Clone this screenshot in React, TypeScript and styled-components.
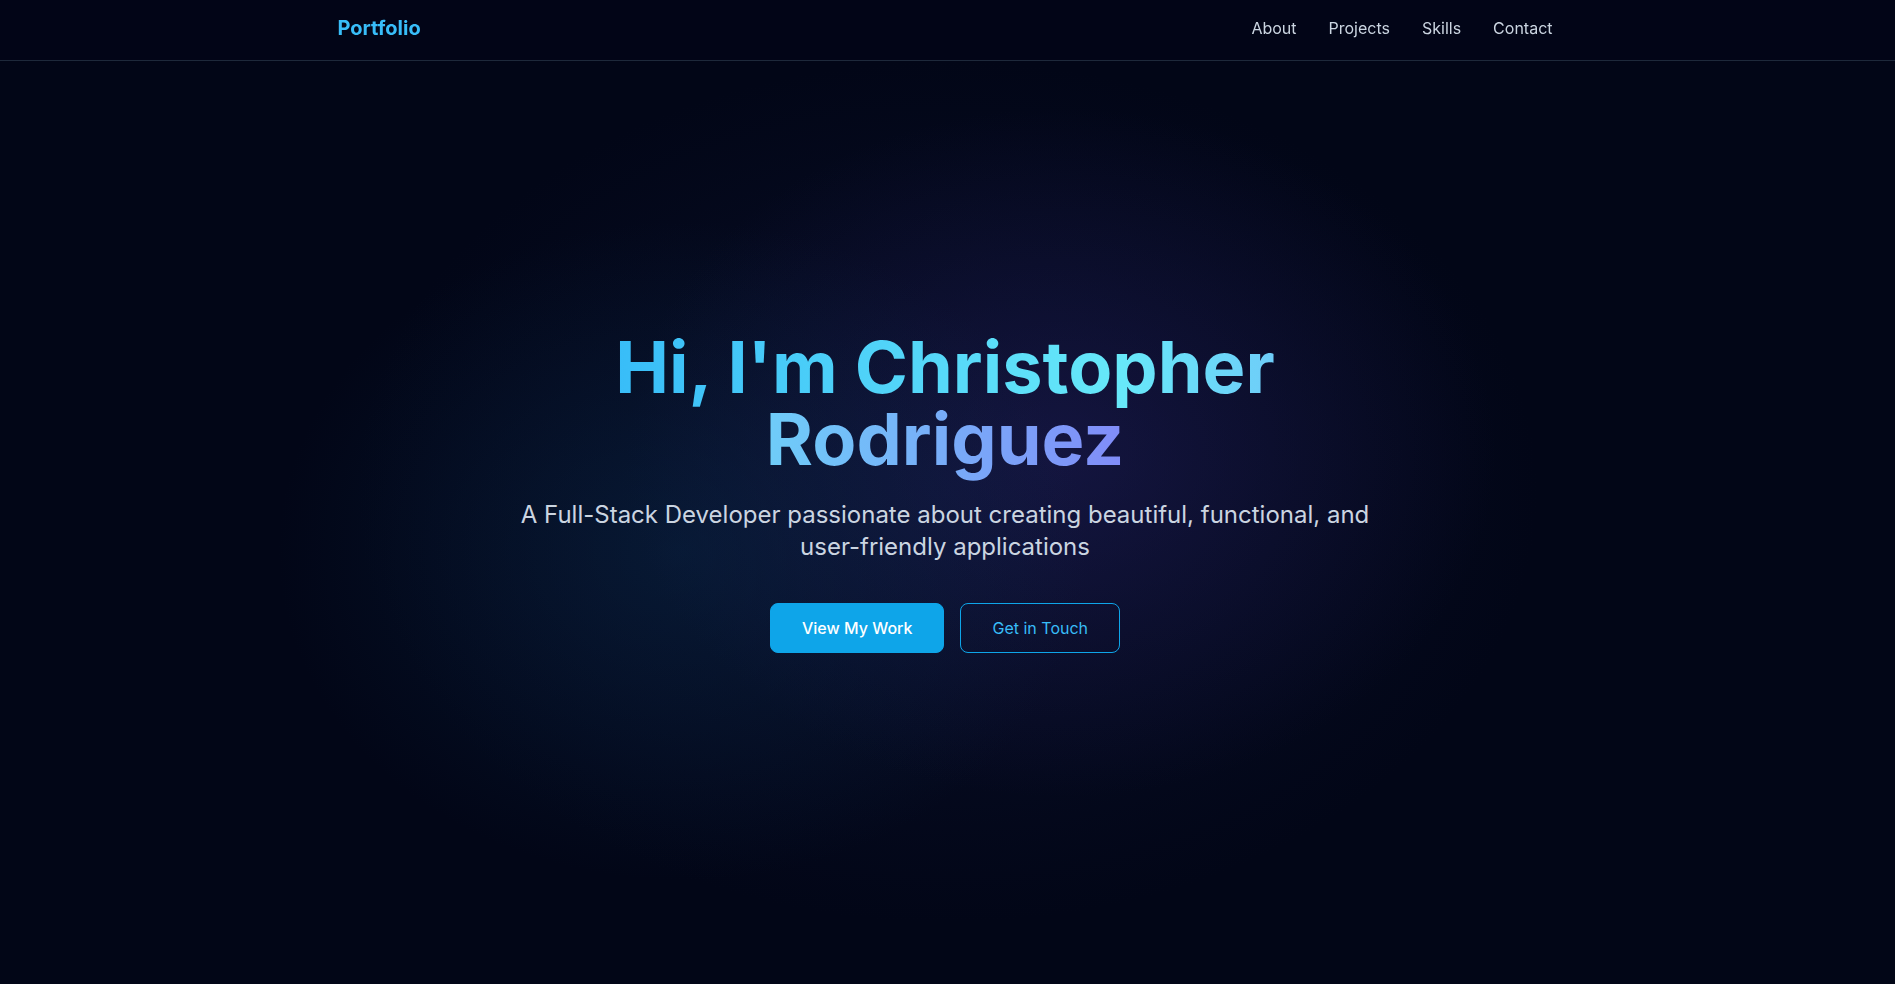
import React from "react";
import styled, { createGlobalStyle } from "styled-components";

const GlobalStyle = createGlobalStyle`
  *, *::before, *::after { box-sizing: border-box; }
  html, body { margin: 0; padding: 0; background: #020617; }
  body {
    font-family: Inter, "Noto Sans", "Liberation Sans", sans-serif;
    color: #e2e8f0;
    -webkit-font-smoothing: antialiased;
  }
`;

const Page = styled.div`
  min-height: 100vh;
  background: #020617;
`;

const NavBar = styled.nav`
  position: fixed;
  top: 0;
  left: 0;
  right: 0;
  z-index: 10;
  background: rgba(2, 6, 23, 0.85);
  border-bottom: 1px solid #1e293b;
`;

const NavInner = styled.div`
  max-width: 1280px;
  margin: 0 auto;
  padding: 0 35px 5px 30px;
  height: 60px;
  display: flex;
  align-items: center;
  justify-content: space-between;
`;

const Logo = styled.a`
  font-size: 20px;
  line-height: 28px;
  font-weight: 700;
  color: #38bdf8;
  text-decoration: none;
`;

const NavLinks = styled.div`
  display: flex;
  gap: 32px;
`;

const NavLink = styled.a`
  font-size: 16px;
  line-height: 24px;
  color: #cbd5e1;
  text-decoration: none;
`;

const Hero = styled.section`
  min-height: 100vh;
  display: flex;
  align-items: center;
  justify-content: center;
  padding: 0 37px 0 32px;
  background:
    radial-gradient(ellipse 540px 440px at 36% 56%, rgba(10, 45, 80, 0.42), rgba(10, 45, 80, 0) 75%),
    radial-gradient(ellipse 580px 460px at 56% 46%, rgba(35, 30, 95, 0.45), rgba(35, 30, 95, 0) 75%),
    radial-gradient(ellipse 740px 540px at 50% 50%, rgba(20, 30, 70, 0.38), rgba(20, 30, 70, 0) 80%),
    #020617;
`;

const HeroContent = styled.div`
  max-width: 896px;
  display: flex;
  flex-direction: column;
  align-items: center;
  text-align: center;
`;

const Title = styled.h1`
  margin: 0 0 24px;
  font-size: 72px;
  line-height: 72px;
  font-weight: 700;
`;

const Gradient = styled.span`
  background-image: linear-gradient(to right, #38bdf8, #67e8f9, #818cf8);
  -webkit-background-clip: text;
  background-clip: text;
  color: transparent;
`;

const Subtitle = styled.p`
  margin: 0 0 40px;
  font-size: 24px;
  line-height: 32px;
  color: #cbd5e1;
`;

const Actions = styled.div`
  display: flex;
  gap: 16px;
  justify-content: center;
`;

const Button = styled.a<{ $variant: "primary" | "outline" }>`
  display: inline-flex;
  align-items: center;
  justify-content: center;
  padding: 12px 31px;
  border-radius: 8px;
  font-size: 16px;
  line-height: 24px;
  text-decoration: none;
  border: 1px solid #0ea5e9;
  font-weight: ${(p) => (p.$variant === "primary" ? 500 : 400)};
  background: ${(p) => (p.$variant === "primary" ? "#0ea5e9" : "transparent")};
  color: ${(p) => (p.$variant === "primary" ? "#ffffff" : "#38bdf8")};
`;

export default function App() {
  return (
    <Page>
      <GlobalStyle />
      <NavBar>
        <NavInner>
          <Logo href="#">Portfolio</Logo>
          <NavLinks>
            <NavLink href="#about">About</NavLink>
            <NavLink href="#projects">Projects</NavLink>
            <NavLink href="#skills">Skills</NavLink>
            <NavLink href="#contact">Contact</NavLink>
          </NavLinks>
        </NavInner>
      </NavBar>
      <Hero>
        <HeroContent>
          <Title>
            <Gradient>Hi, I'm Christopher Rodriguez</Gradient>
          </Title>
          <Subtitle>
            A Full-Stack Developer passionate about creating beautiful, functional, and user-friendly applications
          </Subtitle>
          <Actions>
            <Button $variant="primary" href="#projects">View My Work</Button>
            <Button $variant="outline" href="#contact">Get in Touch</Button>
          </Actions>
        </HeroContent>
      </Hero>
    </Page>
  );
}
